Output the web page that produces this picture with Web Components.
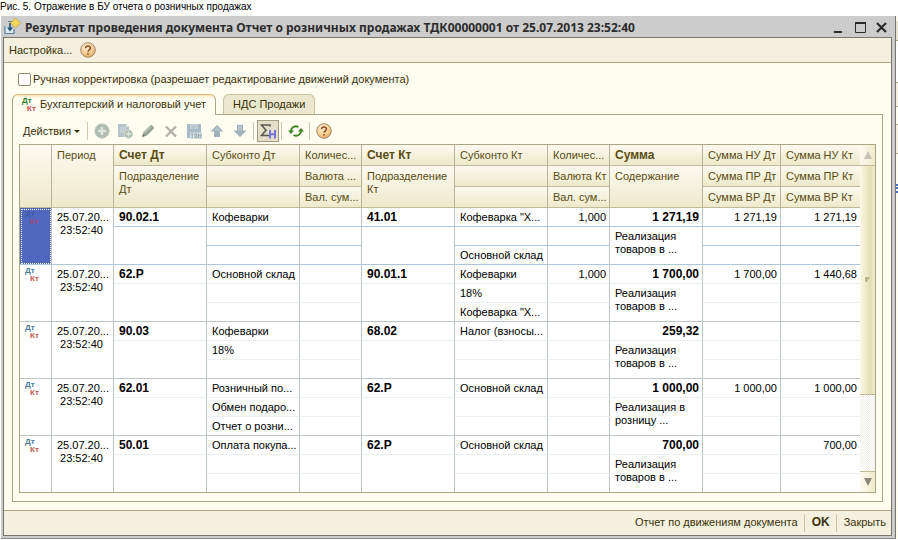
<!DOCTYPE html>
<html lang="ru">
<head>
<meta charset="utf-8">
<title>Отчет о розничных продажах</title>
<style>
  body {
    margin: 0;
    background: #fff;
    font: 11px/13px "Liberation Sans", Arial, sans-serif;
    color: #3a3008;
    --line: #aaa583;
    --cream: #fffdf0;
    --bar: #f5f0df;
  }
  main {
    display: grid;
    grid-template-columns: minmax(0, 1fr) 2px;
  }
</style>
</head>
<body>

<figure-caption>Рис. 5. Отражение в БУ отчета о розничных продажах</figure-caption>
<main>
  <app-window heading="Результат проведения документа Отчет о розничных продажах ТДК00000001 от 25.07.2013 23:52:40">
    <flat-button slot="menu">Настройка...</flat-button>
    <tool-button slot="menu" icon="help" label="Справка"></tool-button>

    <check-field>Ручная корректировка (разрешает редактирование движений документа)</check-field>
    <tab-panel>
      <tool-bar></tool-bar>
      <entries-grid></entries-grid>
    </tab-panel>

    <flat-button slot="footer">Отчет по движениям документа</flat-button>
    <flat-button slot="footer" strong divided>OK</flat-button>
    <flat-button slot="footer" divided>Закрыть</flat-button>
  </app-window>
  <window-behind></window-behind>
</main>

<script>
const icons = {
  help: `<defs><radialGradient id="g" cx=".4" cy=".3" r=".8"><stop offset="0" stop-color="#fff3d8"/><stop offset=".6" stop-color="#f3cb8e"/><stop offset="1" stop-color="#d79a55"/></radialGradient></defs>
    <circle cx="8" cy="8" r="7.3" fill="url(#g)" stroke="#a58a68"/>
    <path d="M5.6 6.2C5.6 3.4 10.4 3.4 10.4 6.1C10.4 7.8 8 7.9 8 9.8" fill="none" stroke="#8c4a22" stroke-width="1.5"/><rect x="7.2" y="11" width="1.6" height="1.6" fill="#8c4a22"/>`,
  add: `<circle cx="8" cy="8" r="7.2" fill="#b0bcb0" stroke="#c3ccbf"/><path d="M8 4v8M4 8h8" stroke="#dfe5da" stroke-width="2.6"/>`,
  copy: `<path d="M1 1h8l3 3v10H1z" fill="#b4c3cb"/><path d="M9 1v3h3" fill="#dde5e6"/><path d="M3 5h6M3 7h6M3 9h4" stroke="#d3dde0"/><circle cx="11.5" cy="11" r="4.2" fill="#aebcae" stroke="#d5dccf"/><path d="M11.5 8.5v5M9 11h5" stroke="#dfe5da" stroke-width="1.5"/>`,
  edit: `<path d="M2 14l1.5-5L10 2.5q1.2-1 2.4.2l1 1q1 1.2 0 2.3L7 12.5z" fill="#98a594"/><path d="M4.5 9.5L11 3.5" stroke="#c8cfc0" stroke-width="1.2"/><path d="M2 14l1-3 2 2z" fill="#6f7b70"/>`,
  remove: `<path d="M3 3.5l10 10M13 3.5l-10 10" stroke="#b3b0a8" stroke-width="2.4"/>`,
  save: `<path d="M1 1h14v14H1z" fill="#a9bbc6"/><path d="M4 1h8v5H4z" fill="#cad6da"/><path d="M5 3h6M5 5h6" stroke="#a9bbc6"/><path d="M4 9.5h12V16H4z" fill="#d6dfe0"/><path d="M5 11h2.5M6.2 11v4M9 11h1.8v3.5H9zM12.5 10.5v4.5M15 10.5v4.5M12.5 12.8H15" fill="none" stroke="#93a7b4"/>`,
  up: `<path d="M8 2l6.5 6.5H11V14H5V8.5H1.5z" fill="#9fb2bd"/><path d="M8 3.5L12 8H4z" fill="#b1c1c9"/>`,
  down: `<path d="M8 14l6.5-6.5H11V2H5v5.5H1.5z" fill="#9fb2bd"/><path d="M6 3h4v5H6z" fill="#b1c1c9"/>`,
  totals: `<path d="M10 3.5V2H1.5L6 7.2L1.5 12.5H10V11" fill="none" stroke="#5a5b50" stroke-width="1.6"/><path d="M10 7v8.500M15 7v8.500M10 11.200h5" stroke="#7474dc" stroke-width="2" fill="none"/>`,
  refresh: `<path d="M3 8.500A5 5 0 0 1 10.500 4M13 7.500A5 5 0 0 1 5.500 12" fill="none" stroke="#3f8527" stroke-width="1.800"/><path d="M0 7.500h6L3 11zM10 8.500h6L13 5z" fill="#3f8527"/>`
};

class Base extends HTMLElement {
  constructor() {
    super();
    this.attachShadow({ mode: 'open' });
  }
  connectedCallback() {
    this.shadowRoot.innerHTML = this.render();
  }
}

customElements.define('figure-caption', class extends Base {
  render() {
    return `
      <style>
        :host { display: block; height: 16px; font-size: 10px; color: #000; }
      </style>
      <slot></slot>`;
  }
});

customElements.define('app-window', class extends Base {
  render() {
    return `
      <style>
        :host { display: block; margin-left: 1px; padding: 0 3px 2px 2px; background: #cbcccb; border-right: 1px solid #77756f; border-bottom: 1px solid #8b8a84; }
        header { display: flex; align-items: center; gap: 4px; height: 21px; padding: 0 4px 0 1px; color: #2b2b2b; }
        h1 { flex: 1; margin: 0; padding-top: 2px; font: bold 12px/16px "Noto Sans", sans-serif; white-space: nowrap; overflow: hidden; }
        .controls { display: flex; gap: 8px; }
        .controls button { width: 13px; height: 14px; padding: 0; border: 0; background: none; color: inherit; }
        svg { display: block; }
        .body { border: 1px solid #77756f; background: var(--cream); }
        nav { display: flex; align-items: center; gap: 5px; height: 24px; padding: 0 5px; background: var(--bar); border-bottom: 1px solid var(--line); }
        section { padding: 7px 8px 8px; }
        footer { display: flex; justify-content: flex-end; align-items: center; height: 24px; padding: 0 5px; gap: 6px; background: var(--bar); border-top: 1px solid var(--line); }
      </style>
      <header>
        <svg width="17" height="17" viewBox="0 0 17 17">
          <path d="M1 8v7.500h9V11" fill="#dce8f2" stroke="#5d7f9c" stroke-width="1.200"/>
          <path d="M6 5v6" stroke="#254f74" stroke-width="1.600"/><path d="M3 9.500h6L6 13.500z" fill="#254f74"/>
          <path d="M4 3.500h4" stroke="#5d7f9c"/>
          <path d="M11.500 0l5 5-5 5-5-5z" fill="#f3d45c" stroke="#c79b2f" stroke-width=".7"/>
        </svg>
        <h1>${this.getAttribute('heading')}</h1>
        <div class="controls">
          <button aria-label="Свернуть"><svg width="13" height="14"><path d="M1 12h8" stroke="#2b2b2b" stroke-width="2"/></svg></button>
          <button aria-label="Развернуть"><svg width="13" height="14"><path d="M1.500 3v9.500h10V3" fill="none" stroke="#2b2b2b"/><path d="M1 3h11" stroke="#2b2b2b" stroke-width="2"/></svg></button>
          <button aria-label="Закрыть окно"><svg width="13" height="14"><path d="M2 3l9 9M11 3l-9 9" stroke="#2b2b2b" stroke-width="2.200"/></svg></button>
        </div>
      </header>
      <div class="body">
        <nav><slot name="menu"></slot></nav>
        <section><slot></slot></section>
        <footer><slot name="footer"></slot></footer>
      </div>`;
  }
});

customElements.define('flat-button', class extends Base {
  render() {
    return `
      <style>
        :host { display: flex; align-items: center; height: 18px; }
        :host([divided]) { padding-left: 7px; border-left: 1px solid #c9c5a5; }
        button { padding: 0; border: 0; background: none; font: inherit; color: inherit; white-space: nowrap; }
        :host([strong]) button { font-weight: bold; font-size: 12px; }
      </style>
      <button type="button"><slot></slot></button>`;
  }
});

customElements.define('tool-button', class extends Base {
  render() {
    return `
      <style>
        :host { display: block; }
        button { display: grid; place-items: center; box-sizing: border-box; width: 22px; height: 22px; padding: 0; border: 1px solid transparent; background: none; }
        :host([pressed]) button { background: #e3dfc8; border-color: #a39e83; }
      </style>
      <button type="button" aria-label="${this.getAttribute('label')}">
        <svg width="16" height="16" viewBox="0 0 16 16">${icons[this.getAttribute('icon')]}</svg>
      </button>`;
  }
});

customElements.define('check-field', class extends Base {
  render() {
    return `
      <style>
        :host { display: block; margin-bottom: 5px; padding-left: 6px; }
        label { display: inline-flex; align-items: center; gap: 2px; height: 18px; }
        input { appearance: none; box-sizing: border-box; width: 13px; height: 13px; margin: 0; border: 1px solid #8d8a74; border-radius: 2px; background: #fff; }
      </style>
      <label><input type="checkbox"><slot></slot></label>`;
  }
});

customElements.define('dtkt-icon', class extends Base {
  render() {
    return `
      <style>
        :host { display: block; width: 16px; font: bold 8px/8px "Liberation Sans", sans-serif; color: var(--dt, #4a7c9c); }
        div { white-space: nowrap; }
        .kt { padding-left: 5px; color: var(--kt, #c05a50); }
      </style>
      <div>Дт</div>
      <div class="kt">Кт</div>`;
  }
});

customElements.define('tab-panel', class extends Base {
  render() {
    return `
      <style>
        :host { display: block; }
        [role=tablist] { display: flex; gap: 7px; height: 21px; }
        [role=tab] { display: flex; align-items: center; gap: 2px; box-sizing: border-box; height: 20px; margin: 0; padding: 0 9px; border: 1px solid #c8c4a0; border-bottom: 0; border-radius: 6px 6px 0 0; background: #ebe8cf; font: inherit; color: inherit; text-align: left; white-space: nowrap; }
        [aria-selected=true] { height: 21px; border-color: var(--line); border-top-color: #e0b878; background: linear-gradient(#fbe3b4, var(--cream) 3px); z-index: 1; }
        dtkt-icon { --dt: #2f7d2a; --kt: #d04a4a; }
        [role=tabpanel] { margin-top: -1px; padding: 0 6px 8px; border: 1px solid var(--line); }
      </style>
      <div role="tablist">
        <button role="tab" aria-selected="true"><dtkt-icon></dtkt-icon>Бухгалтерский и налоговый учет</button>
        <button role="tab" aria-selected="false">НДС Продажи</button>
      </div>
      <div role="tabpanel"><slot></slot></div>`;
  }
});

customElements.define('tool-bar', class extends Base {
  render() {
    const tool = (icon, label) => `<tool-button icon="${icon}" label="${label}"></tool-button>`;
    return `
      <style>
        :host { display: flex; align-items: center; gap: 1px; height: 29px; padding: 4px 0 0 4px; box-sizing: border-box; }
        .menu { display: flex; align-items: center; gap: 3px; padding: 0; margin-right: 5px; border: 0; background: none; font: inherit; color: inherit; }
        .menu::after { content: ""; border: 3px solid transparent; border-top-color: #3a3008; border-bottom: 0; }
        hr { width: 1px; height: 18px; margin: 0 2px 0 1px; border: 0; background: #cdc9ae; }
      </style>
      <button class="menu" type="button">Действия</button>
      <hr>
      ${tool('add', 'Добавить')}
      ${tool('copy', 'Скопировать')}
      ${tool('edit', 'Изменить')}
      ${tool('remove', 'Удалить')}
      ${tool('save', 'Сохранить')}
      ${tool('up', 'Вверх')}
      ${tool('down', 'Вниз')}
      <hr>
      <tool-button icon="totals" label="Итоги" pressed></tool-button>
      <hr>
      ${tool('refresh', 'Обновить')}
      <hr>
      ${tool('help', 'Справка')}`;
  }
});

const widths = [32, 62, 93, 93, 62, 93, 93, 62, 93, 78, 80];

// subDt, subKt: three analytics lines each; nuDt, nuKt: tax accounting amounts
const entries = [
  { dt: '90.02.1', subDt: ['Кофеварки', '', ''], kt: '41.01', subKt: ['Кофеварка "Х...', '', 'Основной склад'], qty: '1,000', sum: '1 271,19', note: 'Реализация<br>товаров в ...', nuDt: '1 271,19', nuKt: '1 271,19' },
  { dt: '62.Р', subDt: ['Основной склад', '', ''], kt: '90.01.1', subKt: ['Кофеварки', '18%', 'Кофеварка "Х...'], qty: '1,000', sum: '1 700,00', note: 'Реализация<br>товаров в ...', nuDt: '1 700,00', nuKt: '1 440,68' },
  { dt: '90.03', subDt: ['Кофеварки', '18%', ''], kt: '68.02', subKt: ['Налог (взносы...', '', ''], qty: '', sum: '259,32', note: 'Реализация<br>товаров в ...', nuDt: '', nuKt: '' },
  { dt: '62.01', subDt: ['Розничный по...', 'Обмен подаро...', 'Отчет о розни...'], kt: '62.Р', subKt: ['Основной склад', '', ''], qty: '', sum: '1 000,00', note: 'Реализация в<br>розницу ...', nuDt: '1 000,00', nuKt: '1 000,00' },
  { dt: '50.01', subDt: ['Оплата покупа...', '', ''], kt: '62.Р', subKt: ['Основной склад', '', ''], qty: '', sum: '700,00', note: 'Реализация<br>товаров в ...', nuDt: '', nuKt: '700,00' }
];

customElements.define('entries-grid', class extends Base {
  entry(e, i) {
    return `
      <tbody class="${i === 0 ? 'current' : ''}">
        <tr>
          <td rowspan="3" class="mark end"><dtkt-icon></dtkt-icon></td>
          <td rowspan="3" class="end">25.07.20...<br>&nbsp;23:52:40</td>
          <td class="b">${e.dt}</td><td>${e.subDt[0]}</td><td></td>
          <td class="b">${e.kt}</td><td>${e.subKt[0]}</td><td class="num">${e.qty}</td>
          <td class="b num">${e.sum}</td><td class="num">${e.nuDt}</td><td class="num">${e.nuKt}</td>
        </tr>
        <tr>
          <td rowspan="2" class="end"></td><td>${e.subDt[1]}</td><td></td>
          <td rowspan="2" class="end"></td><td>${e.subKt[1]}</td><td></td>
          <td rowspan="2" class="end">${e.note}</td><td></td><td></td>
        </tr>
        <tr class="last">
          <td>${e.subDt[2]}</td><td></td><td>${e.subKt[2]}</td><td></td><td></td><td></td>
        </tr>
      </tbody>`;
  }
  render() {
    return `
      <style>
        :host { display: grid; grid-template-columns: minmax(0, 1fr) 15px; border: 1px solid var(--line); background: #fff; }
        table { width: 100%; table-layout: fixed; border-collapse: separate; border-spacing: 0; }
        th, td { box-sizing: border-box; padding: 3px 3px 2px 5px; border: solid #bcc6c6; border-width: 0 1px 1px 0; text-align: left; vertical-align: top; font-weight: normal; white-space: nowrap; overflow: hidden; }
        th { height: 21px; padding: 4px 0 3px 5px; border-color: #c0ba9a #b5b59e #c0ba9a #c0ba9a; background: linear-gradient(#fcfaf0, #eee9cb); color: #5b4c12; }
        td { height: 19px; border-bottom-color: #eceff0; color: #000; }
        .end, .last td { border-bottom-color: #bcc6c6; }
        .current td { border-bottom-color: #afc6da; }
        tbody:last-child .end, tbody:last-child .last td { border-bottom: 0; }
        tbody:last-child .last td { height: 18px; }
        .b { font-weight: bold; font-size: 12px; }
        .num { text-align: right; }
        .mark { padding: 2px 5px; }
        .current .mark { background: #5068bf; outline: 1px dotted #fff; outline-offset: -2px; }
        .current dtkt-icon { --dt: #3c5aa8; --kt: #a04a78; }
      </style>
      <table>
        <colgroup>${widths.map(w => `<col style="width:${w}px">`).join('')}</colgroup>
        <thead>
          <tr>
            <th rowspan="3"></th><th rowspan="3">Период</th>
            <th class="b">Счет Дт</th><th>Субконто Дт</th><th>Количес...</th>
            <th class="b">Счет Кт</th><th>Субконто Кт</th><th>Количес...</th>
            <th class="b">Сумма</th><th>Сумма НУ Дт</th><th>Сумма НУ Кт</th>
          </tr>
          <tr>
            <th rowspan="2">Подразделение<br>Дт</th><th></th><th>Валюта ...</th>
            <th rowspan="2">Подразделение<br>Кт</th><th></th><th>Валюта Кт</th>
            <th rowspan="2">Содержание</th><th>Сумма ПР Дт</th><th>Сумма ПР Кт</th>
          </tr>
          <tr>
            <th></th><th>Вал. сум...</th><th></th><th>Вал. сум...</th><th>Сумма ВР Дт</th><th>Сумма ВР Кт</th>
          </tr>
        </thead>
        ${entries.map((e, i) => this.entry(e, i)).join('')}
      </table>
      <scroll-rail></scroll-rail>`;
  }
});

customElements.define('scroll-rail', class extends Base {
  render() {
    return `
      <style>
        :host { display: flex; flex-direction: column; }
        button { display: grid; place-items: center; box-sizing: border-box; height: 21px; padding: 0; border: 0; background: linear-gradient(90deg, #fcfaf0, #eeeacb); }
        .up { border-bottom: 1px solid #c0ba9a; }
        .down { border-top: 1px solid #c0ba9a; }
        .thumb { flex: 3; display: grid; place-items: center; border-bottom: 1px solid #c0ba9a; background: linear-gradient(90deg, #fbf9e6, #e4dfb4 70%, #f1edcf); }
        .track { flex: 1; background: repeating-conic-gradient(#f1f0e8 0 25%, #fff 0 50%) 0 0 / 2px 2px; }
      </style>
      <button class="up" type="button" aria-label="Прокрутить вверх"><svg width="8" height="8"><path d="M4 0l4 8H0z" fill="#c5c3b6"/></svg></button>
      <div class="thumb"><svg width="5" height="5"><path d="M0 0h5L2 5H0z" fill="#bdb98f"/></svg></div>
      <div class="track"></div>
      <button class="down" type="button" aria-label="Прокрутить вниз"><svg width="8" height="8"><path d="M0 0h8L4 8z" fill="#8a887a"/></svg></button>`;
  }
});

// edge of the next window showing past the right border
customElements.define('window-behind', class extends Base {
  render() {
    return `
      <style>
        :host { display: flex; flex-direction: column; background: var(--cream); }
        div { border-bottom: 1px solid var(--line); }
        .head { height: 19px; background: #e7e5cf; margin-top: 5px; }
        .row { height: 41px; background: #fff; }
        .row + .row { height: 23px; background: var(--bar); }
        .gap { height: 17px; }
        .pane { height: 28px; background: var(--bar); }
        .link { height: 9px; border: 0; border-right: 2px dotted #4a6fc0; margin-top: 30px; }
      </style>
      <div class="head"></div>
      <div class="row"></div>
      <div class="row"></div>
      <div class="gap"></div>
      <div class="pane"></div>
      <div class="link"></div>`;
  }
});
</script>
</body>
</html>
